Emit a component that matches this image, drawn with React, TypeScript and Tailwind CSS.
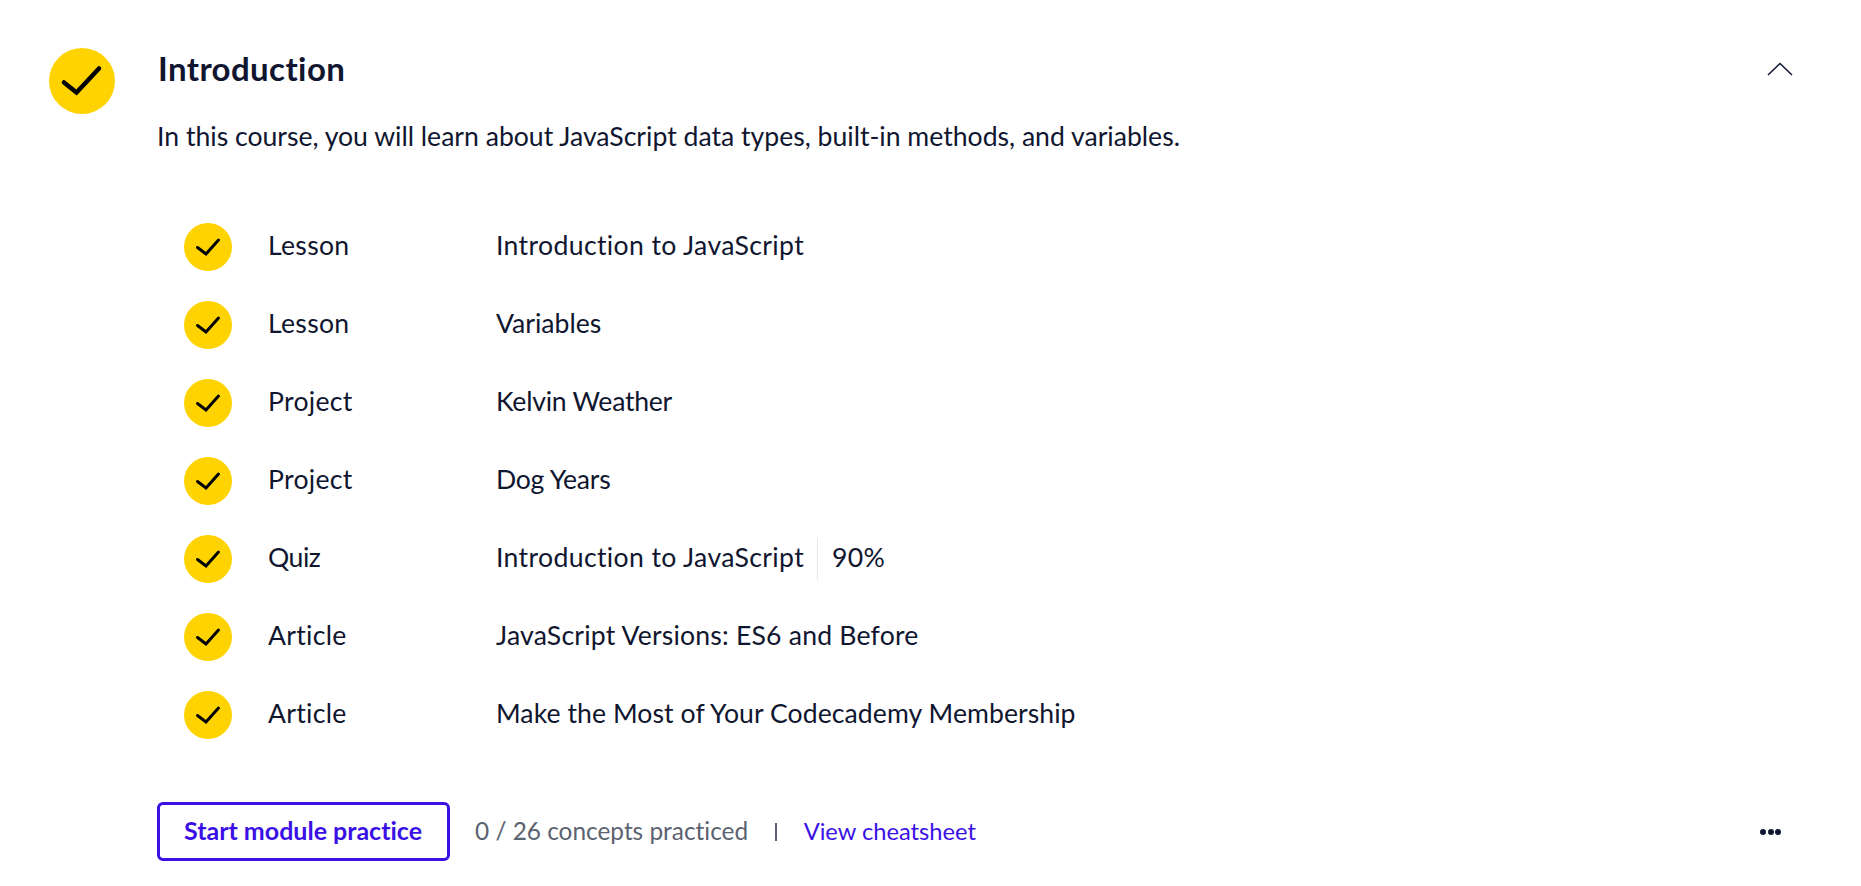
const items = [
  { type: "Lesson", typeClass: "tracking-[0.3px]", title: "Introduction to JavaScript", titleClass: "tracking-[0.36px]" },
  { type: "Lesson", typeClass: "tracking-[0.3px]", title: "Variables", titleClass: "" },
  { type: "Project", typeClass: "tracking-[0.3px]", title: "Kelvin Weather", titleClass: "tracking-[-0.25px]" },
  { type: "Project", typeClass: "tracking-[0.3px]", title: "Dog Years", titleClass: "tracking-[-0.25px]" },
  { type: "Quiz", typeClass: "tracking-[-0.5px]", title: "Introduction to JavaScript", titleClass: "tracking-[0.36px]", score: "90%" },
  { type: "Article", typeClass: "tracking-[0.3px]", title: "JavaScript Versions: ES6 and Before", titleClass: "tracking-[0.2px]" },
  { type: "Article", typeClass: "tracking-[0.3px]", title: "Make the Most of Your Codecademy Membership", titleClass: "tracking-[0.07px]" },
];

function Check({ big }: { big?: boolean }) {
  if (big) {
    return (
      <div className="flex h-[66px] w-[66px] shrink-0 items-center justify-center rounded-full bg-[#FFD300]">
        <svg width="66" height="66" viewBox="0 0 66 66" fill="none">
          <path d="M15 34.5 L27.5 44.5 L50 20.5" stroke="#000000" strokeWidth="4.5" strokeLinecap="round" />
        </svg>
      </div>
    );
  }
  return (
    <div className="flex h-12 w-12 shrink-0 items-center justify-center rounded-full bg-[#FFD300]">
      <svg width="48" height="48" viewBox="0 0 48 48" fill="none">
        <path d="M13.5 24.5 L22 31 L34.5 17" stroke="#000000" strokeWidth="3" strokeLinecap="round" />
      </svg>
    </div>
  );
}

export default function App() {
  return (
    <div className="h-[886px] overflow-hidden bg-white font-['Lato',sans-serif] text-[#10162F] [font-variant-ligatures:none]">
      <div className="flex pl-[49px] pr-[69px] pt-12">
        <Check big />
        <div className="ml-[42px] min-w-0 flex-1">
          {/* Header */}
          <div className="flex h-[42px] items-center justify-between">
            <h2 className="ml-px text-[33px] font-bold tracking-[0.4px]">Introduction</h2>
            <svg className="-mr-px" width="26" height="14" viewBox="0 0 26 14" fill="none">
              <path d="M1 13 L13 1.5 L25 13" stroke="#10162F" strokeWidth="1.5" />
            </svg>
          </div>
          <p className="mt-[28px] text-[26.6px] leading-9">
            In this course, you will learn about JavaScript data types, built-in methods, and variables.
          </p>

          {/* Items */}
          <ul className="mt-[69px] flex flex-col gap-[30px] pl-[27px]">
            {items.map((item, i) => (
              <li key={i} className="flex h-12 items-center text-[26.6px]">
                <Check />
                <span className={`ml-[36px] w-[228px] pb-[3px] ${item.typeClass}`}>{item.type}</span>
                <span className={`pb-[3px] ${item.titleClass}`}>{item.title}</span>
                {item.score && (
                  <span className="ml-[13px] border-l border-[#E8E8EB] pb-[3px] pl-[14px] tracking-[0.3px]">{item.score}</span>
                )}
              </li>
            ))}
          </ul>

          {/* Footer */}
          <div className="mt-[63px] flex items-center text-[24.4px]">
            <button className="h-[59px] w-[293px] rounded-[6px] border-[3px] border-[#3A10E5] pb-px pr-px text-[25px] font-bold text-[#3A10E5]">
              Start module practice
            </button>
            <span className="ml-[25px] text-[#5B6270]">0 / 26 concepts practiced</span>
            <span className="ml-[27px] h-[18px] w-[1.5px] bg-[#5B6270]" />
            <a className="ml-[27px] text-[23.7px] text-[#3A10E5]">View cheatsheet</a>
            <div className="ml-auto mr-[11px] flex gap-[1.5px]">
              <span className="h-[6px] w-[6px] rounded-full bg-[#10162F]" />
              <span className="h-[6px] w-[6px] rounded-full bg-[#10162F]" />
              <span className="h-[6px] w-[6px] rounded-full bg-[#10162F]" />
            </div>
          </div>
        </div>
      </div>
    </div>
  );
}
